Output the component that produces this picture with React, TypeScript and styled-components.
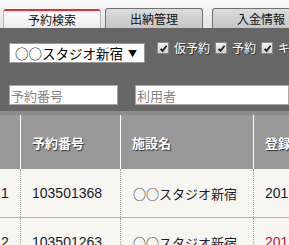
import React, { FC } from 'react';
import styled, { createGlobalStyle } from 'styled-components';

const GlobalStyle = createGlobalStyle`
  body {
    margin: 0;
    font-family: "Noto Sans CJK JP", "Liberation Sans", sans-serif;
    font-size: 13px;
    background: #f7f6f1;
    overflow: hidden;
  }
`;

const tabs = ['予約検索', '出納管理', '入金情報'];

const statuses = ['仮予約', '予約', 'キャンセル'];

const rows = [
  { no: '1', id: '103501368', place: '○○スタジオ新宿', date: '2017/05/10', late: false },
  { no: '2', id: '103501263', place: '○○スタジオ新宿', date: '2017/05/09', late: true },
];

const Check: FC = () => (
  <CheckBox>
    <svg width="9" height="9" viewBox="0 0 9 9">
      <path d="M1.5 4.8 L3.6 6.8 L7.6 1.8" stroke="#222" strokeWidth="1.8" fill="none" />
    </svg>
  </CheckBox>
);

const App: FC = () => {
  return (
    <Page>
      <GlobalStyle />
      <TabBar>
        {tabs.map((t, i) => (
          <Tab key={t} active={i === 0} wide={i === 1}>
            {t}
          </Tab>
        ))}
      </TabBar>
      <Filters>
        <FilterRow>
          <Select>
            <span>○○スタジオ新宿</span>
            <Arrow>▼</Arrow>
          </Select>
          <Checks>
            {statuses.map((s) => (
              <CheckLabel key={s}>
                <Check />
                <span>{s}</span>
              </CheckLabel>
            ))}
          </Checks>
        </FilterRow>
        <InputRow>
          <Input width={109} placeholder="予約番号" />
          <Input placeholder="利用者" />
        </InputRow>
      </Filters>
      <Table>
        <HeadRow>
          <HeadCell />
          <HeadCell>予約番号</HeadCell>
          <HeadCell>施設名</HeadCell>
          <HeadCell>登録日</HeadCell>
        </HeadRow>
        {rows.map((r) => (
          <BodyRow key={r.id}>
            <NoCell>{r.no}</NoCell>
            <Cell>{r.id}</Cell>
            <Cell jp>{r.place}</Cell>
            <Cell late={r.late}>{r.date}</Cell>
          </BodyRow>
        ))}
      </Table>
    </Page>
  );
};

const Page = styled.div`
  width: 289px;
  height: 245px;
  overflow: hidden;
`;

const TabBar = styled.div`
  display: flex;
  align-items: flex-end;
  gap: 4px;
  height: 28px;
  padding-left: 3px;
  background: linear-gradient(#fafafa, #e4e4e4);
  box-sizing: border-box;
`;

const Tab = styled.div<{ active?: boolean; wide?: boolean }>`
  flex: none;
  width: 98px;
  height: ${(p) => (p.active ? 19 : 20)}px;
  margin-right: ${(p) => (p.wide ? 5 : 0)}px;
  box-sizing: border-box;
  display: flex;
  align-items: center;
  justify-content: center;
  font-size: 12px;
  color: #111;
  border: 1px solid ${(p) => (p.active ? '#b8b8b8' : '#707070')};
  border-bottom: none;
  border-top: ${(p) => (p.active ? '2px solid #e0303c' : '1px solid #707070')};
  border-radius: 3px 3px 0 0;
  background: ${(p) =>
    p.active ? 'linear-gradient(#ffffff, #ececec)' : 'linear-gradient(#dcdcdc, #c6c6c6)'};
`;

const Filters = styled.div`
  background: #666666;
  padding: 13px 0 6px 9px;
  display: flex;
  flex-direction: column;
  gap: 22px;
`;

const FilterRow = styled.div`
  display: flex;
  align-items: flex-start;
  gap: 12px;
  white-space: nowrap;
`;

const Select = styled.div`
  flex: none;
  width: 136px;
  height: 20px;
  margin-top: 2px;
  box-sizing: border-box;
  background: #fff;
  border: 1px solid #9a9a9a;
  display: flex;
  align-items: center;
  justify-content: space-between;
  padding: 0 7px 0 5px;
  font-size: 13.5px;
  color: #000;
`;

const Arrow = styled.span`
  font-size: 9px;
`;

const Checks = styled.div`
  display: flex;
  gap: 5px;
`;

const CheckLabel = styled.label`
  display: flex;
  align-items: center;
  gap: 5px;
  color: #fff;
  font-size: 12px;
  text-shadow: 1px 1px 0 #333;
  line-height: 14px;
`;

const CheckBox = styled.span`
  width: 12px;
  height: 12px;
  box-sizing: border-box;
  border: 1px solid #8a8a8a;
  background: linear-gradient(#f4f4f4, #cfcfcf);
  display: flex;
  align-items: center;
  justify-content: center;
`;

const InputRow = styled.div`
  display: flex;
  gap: 17px;
`;

const Input = styled.input<{ width?: number }>`
  flex: ${(p) => (p.width ? 'none' : '1')};
  width: ${(p) => (p.width ? `${p.width}px` : 'auto')};
  min-width: 0;
  height: 20px;
  box-sizing: border-box;
  border: 1px solid #a8a8a8;
  background: #fff;
  padding: 0 0 0 1px;
  font-family: inherit;
  font-size: 13px;
  outline: none;
  &::placeholder {
    color: #858585;
  }
`;

const Table = styled.div`
  border-top: 4px solid #8c8c8c;
`;

const grid = `
  display: grid;
  grid-template-columns: 21px 100px 133px 1fr;
  white-space: nowrap;
`;

const HeadRow = styled.div`
  ${grid}
  height: 54px;
  background: #999999;
`;

const HeadCell = styled.div`
  display: flex;
  align-items: center;
  padding-left: 11px;
  color: #fff;
  font-weight: bold;
  font-size: 13px;
  text-shadow: 1px 1px 1px #333;
  border-right: 1px solid #fff;
  &:last-child {
    border-right: none;
  }
`;

const BodyRow = styled.div`
  ${grid}
  height: 48px;
  background: #f7f6f1;
  border-bottom: 1px solid #b4b4b4;
`;

const Cell = styled.div<{ late?: boolean; jp?: boolean }>`
  display: flex;
  align-items: center;
  padding-left: ${(p) => (p.jp ? 12 : 11)}px;
  font-size: ${(p) => (p.jp ? 13 : 14)}px;
  color: ${(p) => (p.late ? '#c8103c' : '#1a1a2a')};
  border-right: 1px dotted #9a9a9a;
  font-family: ${(p) =>
    p.jp
      ? '"Noto Sans CJK JP", sans-serif'
      : '"Liberation Sans", "Noto Sans CJK JP", sans-serif'};
  &:last-child {
    border-right: none;
  }
`;

const NoCell = styled(Cell)`
  padding-left: 1px;
`;

export default App;
